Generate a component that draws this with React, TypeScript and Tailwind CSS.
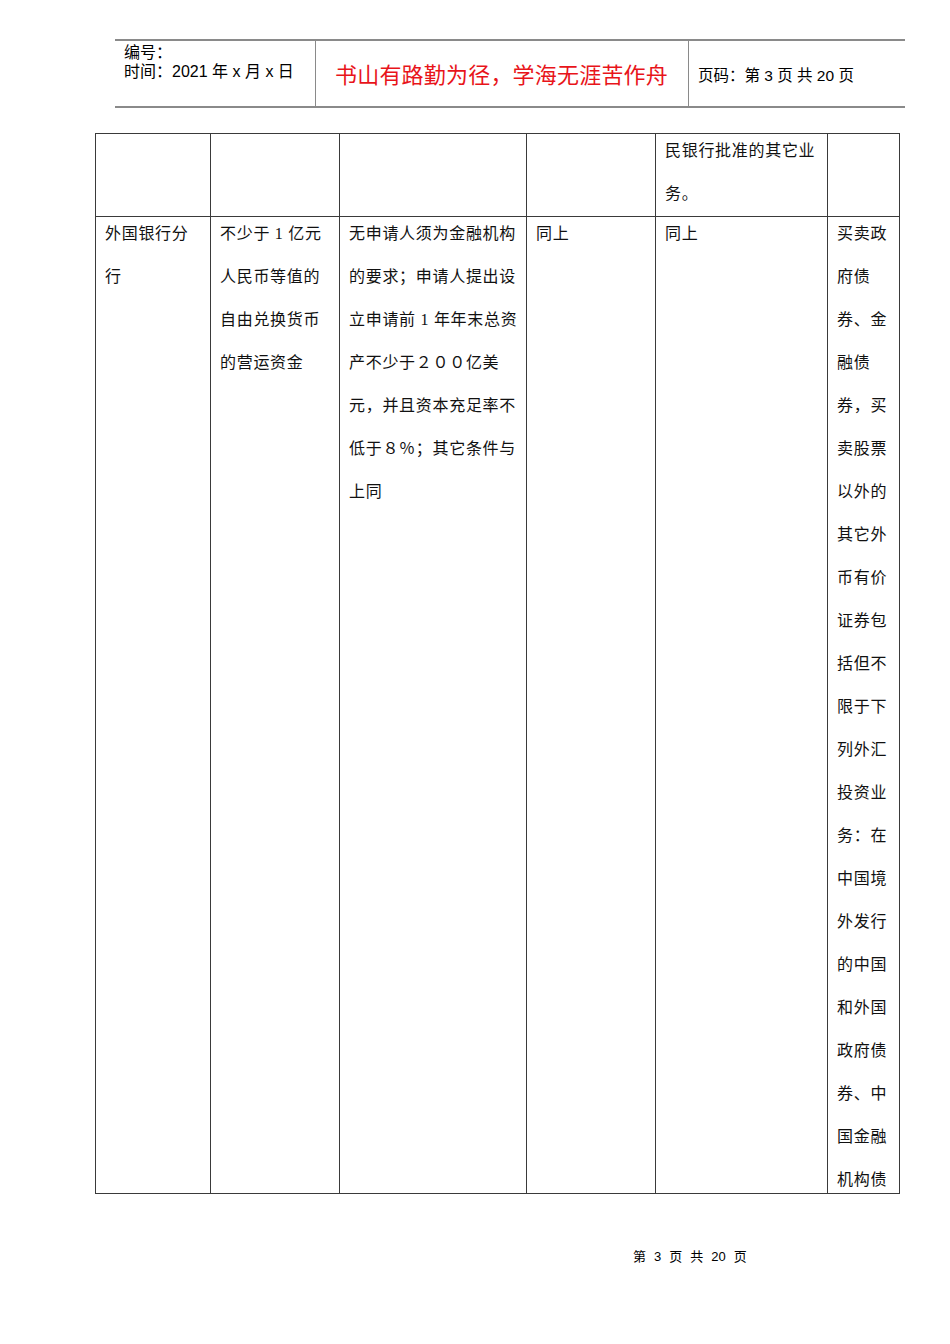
import React from 'react';

const serif = { fontFamily: "'Liberation Serif', 'Noto Sans CJK SC', serif" };
const sans = { fontFamily: "'Liberation Sans', 'Noto Sans CJK SC', sans-serif" };

const Lines = ({ lines }: { lines: string[] }) => (
  <div className="pl-[9px]">
    {lines.map((l, i) => (
      <div key={i} className="h-[43px] pt-[7px] leading-[20px] whitespace-nowrap">
        {l}
      </div>
    ))}
  </div>
);

const col6 = [
  '买卖政', '府债', '券、金', '融债', '券，买', '卖股票', '以外的', '其它外',
  '币有价', '证券包', '括但不', '限于下', '列外汇', '投资业', '务：在', '中国境',
  '外发行', '的中国', '和外国', '政府债', '券、中', '国金融', '机构债',
];

const App = () => {
  return (
    <div className="w-[950px] h-[1344px] bg-white relative text-black">
      {/* page header */}
      <div className="pt-[39px] pl-[115px]" style={sans}>
        <div className="w-[790px] h-[69px] border-t-2 border-b-2 border-[#8a8a8a] flex">
          <div className="w-[201px] border-r border-[#8a8a8a] pl-[9px] pt-[2px] text-[16px] leading-[19px]">
            <div>编号：</div>
            <div>时间：2021 年 x 月 x 日</div>
          </div>
          <div className="w-[373px] border-r border-[#8a8a8a] flex items-center pl-[19px] pt-[4px] text-[22px] text-[#e8141a] tracking-[0.2px]">
            书山有路勤为径，学海无涯苦作舟
          </div>
          <div className="flex-1 flex items-center pl-[9px] pt-[4px] text-[15.5px]">
            页码：第 3 页 共 20 页
          </div>
        </div>
      </div>

      {/* table */}
      <div className="pt-[25px] pl-[95px]" style={serif}>
        <div className="w-[805px] border-l border-t border-[#3a3a3a] grid grid-cols-[115px_129px_187px_129px_172px_72px] text-[16px] tracking-[0.7px] text-[#111]">
          <div className="h-[83px] border-r border-b border-[#3a3a3a]" />
          <div className="h-[83px] border-r border-b border-[#3a3a3a]" />
          <div className="h-[83px] border-r border-b border-[#3a3a3a]" />
          <div className="h-[83px] border-r border-b border-[#3a3a3a]" />
          <div className="h-[83px] border-r border-b border-[#3a3a3a] overflow-hidden">
            <Lines lines={['民银行批准的其它业', '务。']} />
          </div>
          <div className="h-[83px] border-r border-b border-[#3a3a3a]" />

          <div className="h-[977px] border-r border-b border-[#3a3a3a]">
            <Lines lines={['外国银行分', '行']} />
          </div>
          <div className="h-[977px] border-r border-b border-[#3a3a3a]">
            <Lines lines={['不少于 1 亿元', '人民币等值的', '自由兑换货币', '的营运资金']} />
          </div>
          <div className="h-[977px] border-r border-b border-[#3a3a3a]">
            <Lines
              lines={[
                '无申请人须为金融机构',
                '的要求；申请人提出设',
                '立申请前 1 年年末总资',
                '产不少于２００亿美',
                '元，并且资本充足率不',
                '低于８％；其它条件与',
                '上同',
              ]}
            />
          </div>
          <div className="h-[977px] border-r border-b border-[#3a3a3a]">
            <Lines lines={['同上']} />
          </div>
          <div className="h-[977px] border-r border-b border-[#3a3a3a]">
            <Lines lines={['同上']} />
          </div>
          <div className="h-[977px] border-r border-b border-[#3a3a3a] overflow-hidden">
            <Lines lines={col6} />
          </div>
        </div>
      </div>

      {/* footer */}
      <div className="pt-[55px] pl-[633px] flex gap-[8px] text-[13px] leading-[16px]" style={sans}>
        <span>第</span>
        <span>3</span>
        <span>页</span>
        <span>共</span>
        <span>20</span>
        <span>页</span>
      </div>
    </div>
  );
};

export default App;
